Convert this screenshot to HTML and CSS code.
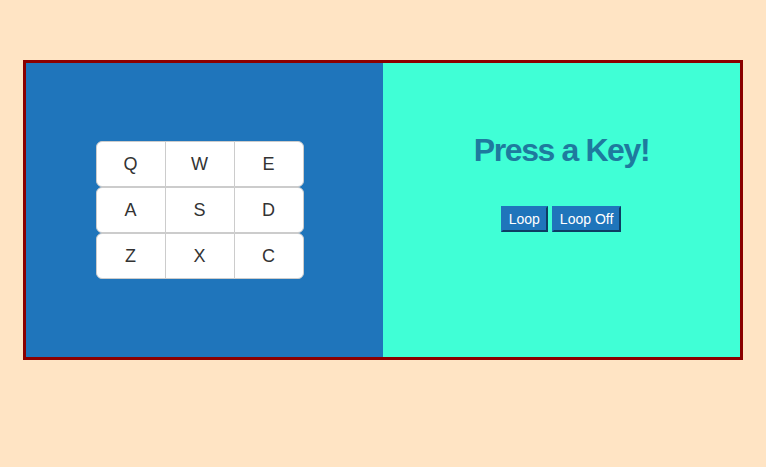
FILE: index.html
```html
<!DOCTYPE html>
<html>
<head>
<meta charset="utf-8">
<link rel="stylesheet" href="styles.css">
</head>
<body>
<div class="frame">
  <div class="pad-panel">
    <div class="keyboard">
      <div class="row"><button class="key">Q</button><button class="key">W</button><button class="key">E</button></div>
      <div class="row"><button class="key">A</button><button class="key">S</button><button class="key">D</button></div>
      <div class="row"><button class="key">Z</button><button class="key">X</button><button class="key">C</button></div>
    </div>
  </div>
  <div class="info-panel">
    <h1 class="title">Press a Key!</h1>
    <div class="controls">
      <button class="ctrl">Loop</button>
      <button class="ctrl">Loop Off</button>
    </div>
  </div>
</div>
</body>
</html>
```

FILE: styles.css
```css
html, body {
  margin: 0;
  padding: 0;
  background: #ffe4c4;
  font-family: "Liberation Sans", Arial, sans-serif;
}
body {
  padding: 60px 23px 0 23px;
}
.frame {
  display: flex;
  width: 714px;
  height: 294px;
  border: 3px solid #8b0000;
}
.pad-panel {
  flex: 0 0 357px;
  background: #1f75bb;
  display: flex;
  align-items: center;
  justify-content: center;
}
.keyboard {
  display: flex;
  flex-direction: column;
  margin-right: 10px;
}
.row {
  display: flex;
}
.key {
  width: 70px;
  height: 46px;
  margin: 0;
  padding: 0;
  background: #fff;
  border: 1px solid #ccc;
  border-radius: 0;
  color: #333;
  font-family: "Liberation Sans", Arial, sans-serif;
  font-size: 18px;
}
.key + .key {
  margin-left: -1px;
}
.key:first-child {
  border-radius: 6px 0 0 6px;
}
.key:last-child {
  border-radius: 0 6px 6px 0;
}
.info-panel {
  flex: 0 0 357px;
  background: #40ffd6;
  display: flex;
  flex-direction: column;
  align-items: center;
}
.title {
  margin: 69px 0 0 0;
  font-size: 32px;
  line-height: 37px;
  letter-spacing: -1.4px;
  font-weight: bold;
  color: #1e7a9e;
}
.controls {
  display: flex;
  gap: 4px;
  margin-top: 37px;
  margin-left: -1px;
}
.ctrl {
  margin: 0;
  height: 26px;
  padding: 0 6px;
  background: #1f75bb;
  color: #fff;
  font-family: "Liberation Sans", Arial, sans-serif;
  font-size: 14px;
  border-width: 2px;
  border-style: solid;
  border-color: #1f75bb #0d3d63 #0d3d63 #1f75bb;
}
```
